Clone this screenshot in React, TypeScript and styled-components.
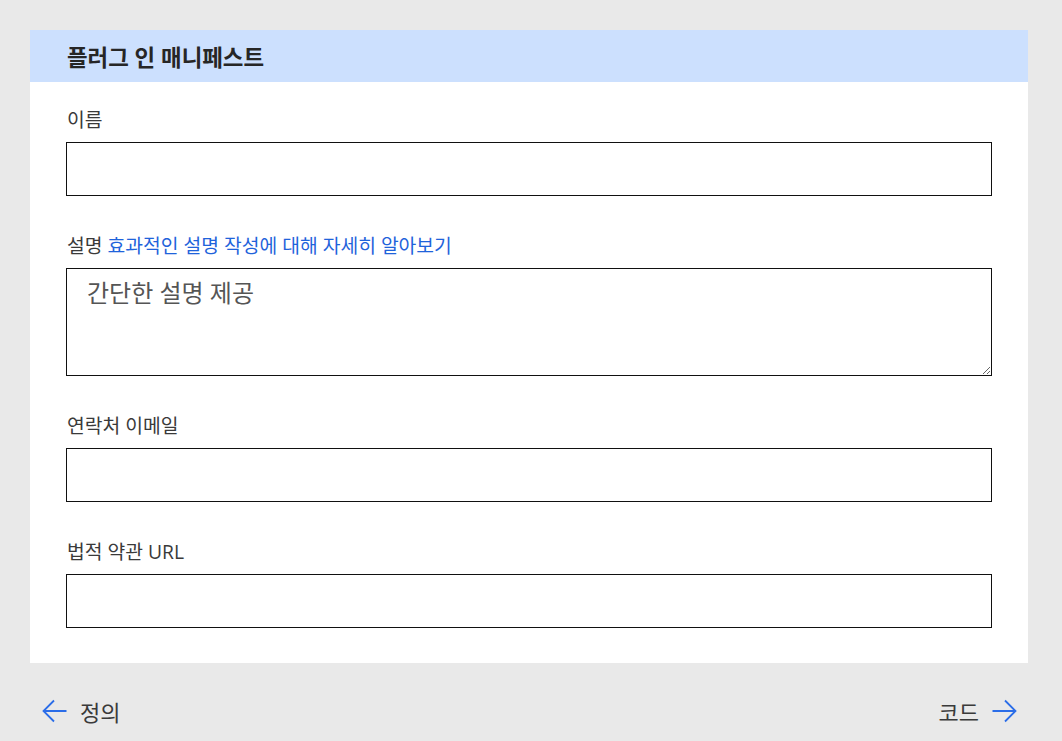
import React from "react";
import styled, { createGlobalStyle } from "styled-components";

const GlobalStyle = createGlobalStyle`
  html, body {
    margin: 0;
    padding: 0;
    background: #e9e9e9;
  }
  body {
    font-family: "Open Sans", "Noto Sans CJK KR", sans-serif;
    color: #333;
  }
`;

const Page = styled.div`
  width: 1062px;
  height: 741px;
  padding: 30px 34px 0 30px;
  box-sizing: border-box;
  display: flex;
  flex-direction: column;
`;

const Card = styled.section`
  background: #fff;
  display: flex;
  flex-direction: column;
`;

const Header = styled.header`
  height: 52px;
  background: #cce0fe;
  display: flex;
  align-items: center;
  padding-left: 37px;
  font-size: 22.4px;
  font-weight: 700;
  color: #262626;
`;

const Form = styled.div`
  padding: 26px 36px 35px 36px;
  display: flex;
  flex-direction: column;
`;

const Field = styled.div`
  display: flex;
  flex-direction: column;
  & + & {
    margin-top: 38px;
  }
`;

const Label = styled.label`
  font-size: 19.3px;
  line-height: 24px;
  color: #3a3a3a;
  margin-bottom: 10px;
  padding-left: 1px;
  white-space: nowrap;
`;

const Link = styled.a`
  color: #1f63db;
  text-decoration: none;
`;

const Input = styled.input`
  height: 54px;
  box-sizing: border-box;
  border: 1px solid #111;
  background: #fff;
  margin: 0;
  font-family: inherit;
`;

const TextArea = styled.textarea`
  height: 108px;
  box-sizing: border-box;
  border: 1px solid #111;
  margin: 0;
  padding: 9px 20px;
  font-family: "Open Sans", "Noto Sans CJK KR", sans-serif;
  font-size: 24px;
  line-height: 30px;
  resize: vertical;
  &::placeholder {
    color: #555;
  }
`;

const Footer = styled.nav`
  flex: 1;
  display: flex;
  justify-content: space-between;
  align-items: center;
  padding: 18px 11px 0 12px;
`;

const NavButton = styled.button`
  display: flex;
  align-items: center;
  gap: 12px;
  background: none;
  border: none;
  padding: 0;
  font-family: inherit;
  font-size: 22px;
  color: #3a3a3a;
  cursor: pointer;
`;

const Arrow = ({ dir }: { dir: "left" | "right" }) => (
  <svg width="26" height="26" viewBox="0 0 26 26" fill="none">
    {dir === "left" ? (
      <path d="M24.5 13H2M12 2.5L1.5 13L12 23.5" stroke="#2b6de8" strokeWidth="1.8" />
    ) : (
      <path d="M1.5 13H24M14 2.5L24.5 13L14 23.5" stroke="#2b6de8" strokeWidth="1.8" />
    )}
  </svg>
);

export default function App() {
  return (
    <>
      <GlobalStyle />
      <Page>
        <Card>
          <Header>플러그 인 매니페스트</Header>
          <Form>
            <Field>
              <Label>이름</Label>
              <Input type="text" />
            </Field>
            <Field>
              <Label>
                설명 <Link href="#">효과적인 설명 작성에 대해 자세히 알아보기</Link>
              </Label>
              <TextArea placeholder="간단한 설명 제공" />
            </Field>
            <Field>
              <Label>연락처 이메일</Label>
              <Input type="text" />
            </Field>
            <Field>
              <Label>법적 약관 URL</Label>
              <Input type="text" />
            </Field>
          </Form>
        </Card>
        <Footer>
          <NavButton>
            <Arrow dir="left" />
            정의
          </NavButton>
          <NavButton>
            코드
            <Arrow dir="right" />
          </NavButton>
        </Footer>
      </Page>
    </>
  );
}
